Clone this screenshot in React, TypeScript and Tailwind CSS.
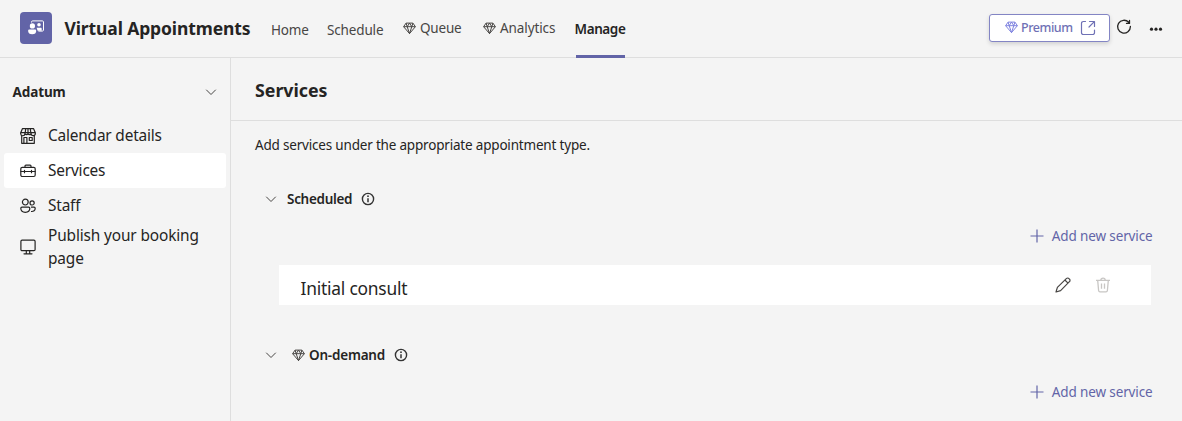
import React from 'react';

type IconProps = { className?: string };

const Diamond = ({ className = '' }: IconProps) => (
  <svg className={className} width="13" height="13" viewBox="0 0 13 13" fill="none" stroke="currentColor" strokeWidth="1" strokeLinejoin="round">
    <path d="M3.1 1.1h6.8l2.5 3.6-5.9 6.9L.6 4.7z" />
    <path d="M.6 4.7h11.8M3.1 1.1l1.1 3.6 2.3 6.9 2.3-6.9 1.1-3.6M4.2 4.7l2.3-3.6 2.3 3.6" />
  </svg>
);

const Chevron = ({ className = '' }: IconProps) => (
  <svg className={className} width="12" height="12" viewBox="0 0 12 12" fill="none" stroke="currentColor" strokeWidth="1" strokeLinecap="round" strokeLinejoin="round">
    <path d="M1.5 4 6 8.5 10.500 4" />
  </svg>
);

const Info = () => (
  <svg className="text-[#333]" width="14" height="14" viewBox="0 0 14 14" fill="none" stroke="currentColor">
    <circle cx="7" cy="7" r="5.6" strokeWidth="1.4" />
    <path d="M7 6.2v4" strokeWidth="1.5" />
    <circle cx="7" cy="4.2" r=".9" fill="currentColor" stroke="none" />
  </svg>
);

const AppLogo = () => (
  <svg width="18" height="18" viewBox="0 0 18 18" fill="none">
    <path d="M4.500 3.500V3c0-.7.5-1.100 1.100-1.100h9.800c.7 0 1.100.5 1.100 1.100v8c0 .6-.5 1.100-1.100 1.100h-4" stroke="#fff" strokeWidth="1" />
    <circle cx="12" cy="5.800" r="1.800" fill="#fff" />
    <path d="M9.600 8.700h3.900c.8 0 1.200.5 1.200 1.100v2H10.600z" fill="#fff" />
    <circle cx="5.400" cy="6.900" r="2.600" fill="#fff" />
    <path d="M2.500 10.600h5.300c.8 0 1.400.5 1.400 1.300 0 2-1.400 3.300-4 3.300s-4.100-1.300-4.100-3.300c0-.8.6-1.300 1.400-1.300z" fill="#fff" />
  </svg>
);

const Store = () => (
  <svg width="16" height="16" viewBox="0 0 16 16" fill="none" stroke="currentColor" strokeWidth="1.2" strokeLinejoin="round">
    <path d="M2.400.7h11.200l1.700 4H.7zM5.700.7 5.200 4.700M8 .7v4M10.300.7l.5 4" />
    <path d="M.7 4.700v.8a2 2 0 0 0 4.200.3V4.700M4.900 5.500a1.600 1.600 0 0 0 3.100 0v-.8M8 5.500a1.600 1.600 0 0 0 3.100 0v-.8M11.100 5.500a2 2 0 0 0 4.200 0v-.8" />
    <path d="M1.700 7.300v8h12.600v-8M3.900 15.300V9.500h3v5.800M9.300 9.500h2.900v3H9.300z" />
  </svg>
);

const Toolbox = () => (
  <svg width="16" height="16" viewBox="0 0 16 16" fill="none" stroke="currentColor" strokeWidth="1.2" strokeLinejoin="round" strokeLinecap="round">
    <rect x=".8" y="4.300" width="14.400" height="9.200" rx="1.500" />
    <path d="M5 4.200V3c0-.5.4-.9.900-.9h4.200c.5 0 .9.4.9.9v1.200M.9 8.500h14.200M4.500 7.400v2.300M11.500 7.400v2.300" />
  </svg>
);

const People = () => (
  <svg width="16" height="16" viewBox="0 0 16 16" fill="none" stroke="currentColor" strokeWidth="1.200">
    <circle cx="5.300" cy="4.100" r="2.900" />
    <circle cx="12.100" cy="4.900" r="2.100" />
    <path d="M2 9.100h6.600c.7 0 1.200.5 1.200 1.200 0 2.700-1.700 4-4.500 4s-4.500-1.300-4.500-4c0-.7.5-1.200 1.200-1.200z" />
    <path d="M11 9.100h3c.7 0 1.200.5 1.200 1.200 0 2.300-1.500 3.400-4.200 3.200" />
  </svg>
);

const Desktop = () => (
  <svg width="16" height="16" viewBox="0 0 16 16" fill="none" stroke="currentColor" strokeWidth="1.200" strokeLinejoin="round" strokeLinecap="round">
    <rect x=".9" y="1.200" width="14.200" height="10.500" rx="1.200" />
    <path d="M6.300 11.800v2.800M9.700 11.800v2.800M4 14.800h8" />
  </svg>
);

const OpenExternal = () => (
  <svg width="16" height="16" viewBox="0 0 16 16" fill="none" stroke="currentColor" strokeWidth="1.200" strokeLinecap="round" strokeLinejoin="round">
    <path d="M5.500 1.500H3.300a1.800 1.800 0 0 0-1.800 1.800v9.400a1.800 1.800 0 0 0 1.800 1.800h9.400a1.800 1.800 0 0 0 1.800-1.800V10M9.500 1.500h5v5M14.300 1.700 9 7" />
  </svg>
);

const Refresh = () => (
  <svg width="16" height="16" viewBox="0 0 16 16" fill="none" stroke="currentColor" strokeWidth="1.300" strokeLinecap="round" strokeLinejoin="round">
    <path d="M12.700 3.300A6.400 6.400 0 1 0 14.400 7.500M13.500 1.400v3h-3" />
  </svg>
);

const Pencil = () => (
  <svg width="16" height="16" viewBox="0 0 16 16" fill="none" stroke="#484644" strokeWidth="1.200" strokeLinejoin="round">
    <path d="M11.300 1.600c.8-.8 2-.8 2.700 0l.400.4c.8.8.8 2 0 2.700L5.600 13.600 1 15l1.400-4.600z" />
    <path d="m9.900 3 3.100 3.100" />
  </svg>
);

const Trash = () => (
  <svg width="16" height="16" viewBox="0 0 16 16" fill="none" stroke="#c8c6c4" strokeWidth="1.300" strokeLinejoin="round">
    <path d="M1 3.300h14M2.700 3.500l.9 10c.1.800.6 1.300 1.400 1.300h6c.8 0 1.300-.5 1.400-1.300l.9-10M5.800 3.200c0-1.200.9-2 2.200-2s2.200.8 2.200 2M6.500 6.400v5.300M9.500 6.400v5.300" />
  </svg>
);

const Plus = () => (
  <svg width="14" height="14" viewBox="0 0 14 14" stroke="currentColor" strokeWidth="1.200">
    <path d="M7 .5v13M.5 7h13" />
  </svg>
);

const AddService = () => (
  <button className="flex h-5 items-center gap-2 self-end text-[13.5px] tracking-[-0.13px] text-[#6264a7]">
    <Plus />
    <span>Add new service</span>
  </button>
);

export default function App() {
  return (
    <div className="flex h-[421px] w-[1182px] flex-col overflow-hidden bg-[#f4f4f4] font-['Noto_Sans','Open_Sans',sans-serif] text-[#252423]">
      <header className="flex h-[58px] shrink-0 items-center border-b border-[#dedede] pl-5">
        <div className="mb-px flex size-8 items-center justify-center rounded-[4px] bg-[#6264a7]">
          <AppLogo />
        </div>
        <h1 className="ml-[12.500px] w-[206.500px] whitespace-nowrap text-[17.5px] font-bold tracking-[-0.12px]">Virtual Appointments</h1>
        <nav className="flex h-full flex-1 items-center whitespace-nowrap text-[13.5px] text-[#484644]">
          <a className="w-14 pt-[3px] tracking-[-0.15px]">Home</a>
          <a className="w-[76px] pt-[3px] tracking-[-0.15px]">Schedule</a>
          <a className="flex w-20 items-center gap-1 tracking-[-0.2px]"><Diamond />Queue</a>
          <a className="flex w-[91.500px] items-center gap-1 tracking-[-0.1px]"><Diamond />Analytics</a>
          <a className="relative flex h-full items-center pt-[2px] font-semibold tracking-[-0.4px] text-[#252423]">
            Manage
            <span className="absolute -bottom-px left-px h-[3px] w-[49px] bg-[#6264a7]" />
          </a>
        </nav>
        <button className="mb-0.5 flex h-7 w-[121px] items-center rounded-[3px] border border-[#8385c4] bg-white pl-[15px] text-[12.5px] font-medium tracking-[-0.45px] text-[#6f71b5] shadow-[0_2px_4px_rgba(0,0,0,0.14)]">
          <Diamond className="mr-[3px] text-[#7f83e0]" />
          <span className="w-[59px] pt-px text-left">Premium</span>
          <OpenExternal />
        </button>
        <button className="mb-1 ml-1.5"><Refresh /></button>
        <button className="ml-[17px] mr-[19px]">
          <svg width="14" height="4" viewBox="0 0 14 4" fill="currentColor"><circle cx="2.500" cy="2.200" r="1.600" /><circle cx="7" cy="2.200" r="1.600" /><circle cx="11.500" cy="2.200" r="1.600" /></svg>
        </button>
      </header>

      <div className="flex min-h-0 flex-1">
        <aside className="w-[231px] shrink-0 border-r border-[#dedede]">
          <div className="flex h-[68px] items-center justify-between pl-[12.500px] pr-[13px] text-[13.5px] font-bold tracking-[-0.1px]">
            Adatum
            <Chevron className="text-[#484644]" />
          </div>
          <ul className="mt-[-8px] px-1 text-[15.4px] leading-[23px] tracking-[-0.18px]">
            <li className="flex h-[35px] items-center gap-3 pl-4"><Store /><span>Calendar details</span></li>
            <li className="flex h-[35px] items-center gap-3 rounded-[3px] bg-white pl-4"><Toolbox /><span>Services</span></li>
            <li className="flex h-[35px] items-center gap-3 pl-4"><People /><span>Staff</span></li>
            <li className="flex items-center gap-3 pl-4 pt-px tracking-[-0.13px]"><Desktop /><span>Publish your booking<br />page</span></li>
          </ul>
        </aside>

        <main className="flex min-w-0 flex-1 flex-col">
          <h2 className="flex h-[63px] shrink-0 items-center border-b border-[#dedede] pb-0.5 pl-6 pt-1 text-[17.8px] font-bold">Services</h2>
          <p className="mt-[14px] h-5 pl-6 text-[13.5px] leading-[21px] tracking-[-0.19px]">Add services under the appropriate appointment type.</p>

          <section className="mt-[34px] flex flex-col pl-[34px] pr-[29.500px]">
            <div className="flex h-5 items-center text-[13.5px] font-semibold tracking-[-0.3px]">
              <Chevron className="mr-2.5 text-[#484644]" />
              <span className="w-[74px]">Scheduled</span>
              <Info />
            </div>
            <div className="mt-[17px] flex flex-col"><AddService /></div>
            <div className="ml-[14px] mr-[1.500px] mt-[19px] flex h-10 items-center bg-white pl-[21.500px] pr-[40.500px]">
              <span className="flex-1 pt-[7px] text-[17.4px] tracking-[-0.22px]">Initial consult</span>
              <button className="mr-6"><Pencil /></button>
              <button><Trash /></button>
            </div>
          </section>

          <section className="mt-10 flex flex-col pl-[34px] pr-[29.500px]">
            <div className="flex h-5 items-center text-[13.5px] font-semibold tracking-[-0.2px]">
              <Chevron className="mr-[15px] text-[#484644]" />
              <Diamond className="mr-1 text-[#484644]" />
              <span className="w-[85px]">On-demand</span>
              <Info />
            </div>
            <div className="mt-[17px] flex flex-col"><AddService /></div>
          </section>
        </main>
      </div>
    </div>
  );
}
